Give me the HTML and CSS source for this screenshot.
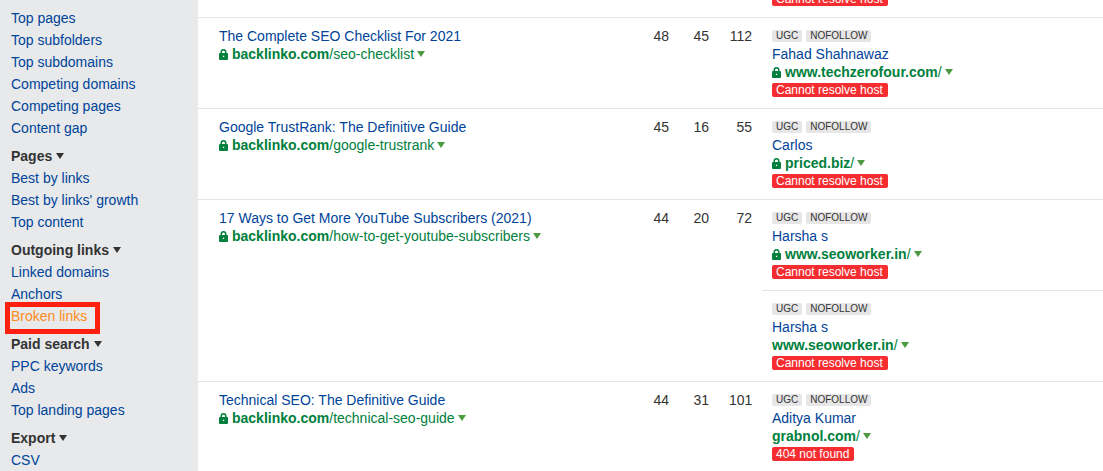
FILE: index.html
```html
<!DOCTYPE html>
<html lang="en">
<head>
    <meta charset="UTF-8">
    <meta name="viewport" content="width=device-width, initial-scale=1.0">
    <title>Broken links</title>
    <link rel="stylesheet" href="styles.css">
</head>
<body>
    <!-- Shared icons -->
    <svg class="sprite" aria-hidden="true">
        <symbol id="lock" viewBox="0 0 9 11">
            <path fill-rule="evenodd" d="M1.5 4V3a3 3 0 0 1 6 0v1H8a1 1 0 0 1 1 1v5a1 1 0 0 1-1 1H1a1 1 0 0 1-1-1V5a1 1 0 0 1 1-1zM3 4h3V3a1.5 1.5 0 0 0-3 0zM3.9 6.8v1.3h1.3V6.8z"/>
        </symbol>
        <symbol id="caret" viewBox="0 0 8 6">
            <path d="M0 0h8L4 6z"/>
        </symbol>
    </svg>

    <div class="layout">
        <nav class="sidebar">
            <ul class="menu">
                <li><a href="#">Top pages</a></li>
                <li><a href="#">Top subfolders</a></li>
                <li><a href="#">Top subdomains</a></li>
                <li><a href="#">Competing domains</a></li>
                <li><a href="#">Competing pages</a></li>
                <li><a href="#">Content gap</a></li>
            </ul>
            <button class="menu-title" type="button">Pages <svg class="caret"><use href="#caret"/></svg></button>
            <ul class="menu">
                <li><a href="#">Best by links</a></li>
                <li><a href="#">Best by links' growth</a></li>
                <li><a href="#">Top content</a></li>
            </ul>
            <button class="menu-title" type="button">Outgoing links <svg class="caret"><use href="#caret"/></svg></button>
            <ul class="menu">
                <li><a href="#">Linked domains</a></li>
                <li><a href="#">Anchors</a></li>
                <li class="current"><a href="#">Broken links</a></li>
            </ul>
            <button class="menu-title" type="button">Paid search <svg class="caret"><use href="#caret"/></svg></button>
            <ul class="menu">
                <li><a href="#">PPC keywords</a></li>
                <li><a href="#">Ads</a></li>
                <li><a href="#">Top landing pages</a></li>
            </ul>
            <button class="menu-title" type="button">Export <svg class="caret"><use href="#caret"/></svg></button>
            <ul class="menu">
                <li><a href="#">CSV</a></li>
            </ul>
        </nav>

        <main class="content">
            <table class="links-table">
                <colgroup>
                    <col>
                    <col class="col-number">
                    <col class="col-number">
                    <col class="col-number-wide">
                    <col class="col-target">
                </colgroup>
                <tbody>
                    <tr class="scrolled">
                        <td></td>
                        <td></td>
                        <td></td>
                        <td></td>
                        <td class="target">
                            <div class="line"><span class="status">Cannot resolve host</span></div>
                        </td>
                    </tr>
                    <tr>
                        <td class="source">
                            <a class="title" href="#">The Complete SEO Checklist For 2021</a>
                            <div class="line url">
                                <svg class="lock"><use href="#lock"/></svg>
                                <a href="#"><b>backlinko.com</b>/seo-checklist</a>
                                <button class="toggle" type="button" aria-label="Options"><svg class="caret"><use href="#caret"/></svg></button>
                            </div>
                        </td>
                        <td class="number">48</td>
                        <td class="number">45</td>
                        <td class="number">112</td>
                        <td class="target">
                            <div class="line tags"><span class="tag">UGC</span><span class="tag">NOFOLLOW</span></div>
                            <a class="title" href="#">Fahad Shahnawaz</a>
                            <div class="line url">
                                <svg class="lock"><use href="#lock"/></svg>
                                <a href="#"><b>www.techzerofour.com</b>/</a>
                                <button class="toggle" type="button" aria-label="Options"><svg class="caret"><use href="#caret"/></svg></button>
                            </div>
                            <div class="line"><span class="status">Cannot resolve host</span></div>
                        </td>
                    </tr>
                    <tr>
                        <td class="source">
                            <a class="title" href="#">Google TrustRank: The Definitive Guide</a>
                            <div class="line url">
                                <svg class="lock"><use href="#lock"/></svg>
                                <a href="#"><b>backlinko.com</b>/google-trustrank</a>
                                <button class="toggle" type="button" aria-label="Options"><svg class="caret"><use href="#caret"/></svg></button>
                            </div>
                        </td>
                        <td class="number">45</td>
                        <td class="number">16</td>
                        <td class="number">55</td>
                        <td class="target">
                            <div class="line tags"><span class="tag">UGC</span><span class="tag">NOFOLLOW</span></div>
                            <a class="title" href="#">Carlos</a>
                            <div class="line url">
                                <svg class="lock"><use href="#lock"/></svg>
                                <a href="#"><b>priced.biz</b>/</a>
                                <button class="toggle" type="button" aria-label="Options"><svg class="caret"><use href="#caret"/></svg></button>
                            </div>
                            <div class="line"><span class="status">Cannot resolve host</span></div>
                        </td>
                    </tr>
                    <tr>
                        <td class="source" rowspan="2">
                            <a class="title" href="#">17 Ways to Get More YouTube Subscribers (2021)</a>
                            <div class="line url">
                                <svg class="lock"><use href="#lock"/></svg>
                                <a href="#"><b>backlinko.com</b>/how-to-get-youtube-subscribers</a>
                                <button class="toggle" type="button" aria-label="Options"><svg class="caret"><use href="#caret"/></svg></button>
                            </div>
                        </td>
                        <td class="number" rowspan="2">44</td>
                        <td class="number" rowspan="2">20</td>
                        <td class="number" rowspan="2">72</td>
                        <td class="target">
                            <div class="line tags"><span class="tag">UGC</span><span class="tag">NOFOLLOW</span></div>
                            <a class="title" href="#">Harsha s</a>
                            <div class="line url">
                                <svg class="lock"><use href="#lock"/></svg>
                                <a href="#"><b>www.seoworker.in</b>/</a>
                                <button class="toggle" type="button" aria-label="Options"><svg class="caret"><use href="#caret"/></svg></button>
                            </div>
                            <div class="line"><span class="status">Cannot resolve host</span></div>
                        </td>
                    </tr>
                    <tr>
                        <td class="target">
                            <div class="line tags"><span class="tag">UGC</span><span class="tag">NOFOLLOW</span></div>
                            <a class="title" href="#">Harsha s</a>
                            <div class="line url">
                                <a href="#"><b>www.seoworker.in</b>/</a>
                                <button class="toggle" type="button" aria-label="Options"><svg class="caret"><use href="#caret"/></svg></button>
                            </div>
                            <div class="line"><span class="status">Cannot resolve host</span></div>
                        </td>
                    </tr>
                    <tr>
                        <td class="source">
                            <a class="title" href="#">Technical SEO: The Definitive Guide</a>
                            <div class="line url">
                                <svg class="lock"><use href="#lock"/></svg>
                                <a href="#"><b>backlinko.com</b>/technical-seo-guide</a>
                                <button class="toggle" type="button" aria-label="Options"><svg class="caret"><use href="#caret"/></svg></button>
                            </div>
                        </td>
                        <td class="number">44</td>
                        <td class="number">31</td>
                        <td class="number">101</td>
                        <td class="target">
                            <div class="line tags"><span class="tag">UGC</span><span class="tag">NOFOLLOW</span></div>
                            <a class="title" href="#">Aditya Kumar</a>
                            <div class="line url">
                                <a href="#"><b>grabnol.com</b>/</a>
                                <button class="toggle" type="button" aria-label="Options"><svg class="caret"><use href="#caret"/></svg></button>
                            </div>
                            <div class="line"><span class="status">404 not found</span></div>
                        </td>
                    </tr>
                </tbody>
            </table>
        </main>
    </div>
</body>
</html>
```
FILE: styles.css
```css
*,
*::after {
    box-sizing: border-box;
}

body {
    margin: 0;
    height: 100vh;
    overflow: hidden;
    font-family: "Liberation Sans", Arial, sans-serif;
    font-size: 14px;
    line-height: 18px;
    color: #333;
    background-color: #fff;
}

a {
    color: #049;
    text-decoration: none;
}

a:hover {
    text-decoration: underline;
}

button {
    padding: 0;
    border: none;
    background: none;
    font: inherit;
    color: inherit;
    cursor: pointer;
}

.sprite {
    display: none;
}

.layout {
    display: flex;
    min-height: 100vh;
}

/* Sidebar */
.sidebar {
    flex: 0 0 198px;
    padding: 7px 11px;
    background-color: #e7e9eb;
    line-height: 22px;
}

.menu {
    margin: 0 0 6px;
    padding: 0;
    list-style: none;
}

.menu-title {
    display: flex;
    align-items: center;
    gap: 4px;
    font-weight: bold;
    line-height: 22px;
}

.current {
    position: relative;
}

.current a {
    color: #ff8c1a;
}

.current::after {
    content: "";
    position: absolute;
    top: -3px;
    left: -6px;
    width: 95px;
    height: 32px;
    border: 5px solid #ff1f0e;
    pointer-events: none;
}

.caret {
    display: block;
    width: 8px;
    height: 6px;
    fill: currentColor;
}

/* Table */
.content {
    flex: 1;
    min-width: 0;
}

.links-table {
    width: 100%;
    margin-top: -10px;
    border-spacing: 0;
    table-layout: fixed;
}

.col-number {
    width: 40px;
}

.col-number-wide {
    width: 43px;
}

.col-target {
    width: 341px;
}

.links-table td {
    padding: 9px 10px;
    border-top: 1px solid #e3e5e6;
    vertical-align: top;
}

.links-table .scrolled td {
    padding-top: 0;
    border-top: none;
}

.links-table .source {
    padding-left: 21px;
}

.number {
    text-align: right;
}

.title {
    display: block;
}

.line {
    display: flex;
    align-items: center;
    height: 18px;
}

.url {
    gap: 3px;
    color: #00803c;
}

.url a {
    color: inherit;
}

.lock {
    width: 9px;
    height: 11px;
    margin-right: 1px;
    fill: currentColor;
}

.toggle {
    color: #4b9b3f;
}

.tags {
    gap: 4px;
}

.tag {
    padding: 0 4px;
    border-radius: 2px;
    background-color: #e6e6e6;
    font-size: 10px;
    line-height: 12px;
}

.status {
    padding: 0 5px 0 4px;
    border-radius: 2px;
    background-color: #f52d30;
    font-size: 12px;
    line-height: 14px;
    color: #fff;
}
```
